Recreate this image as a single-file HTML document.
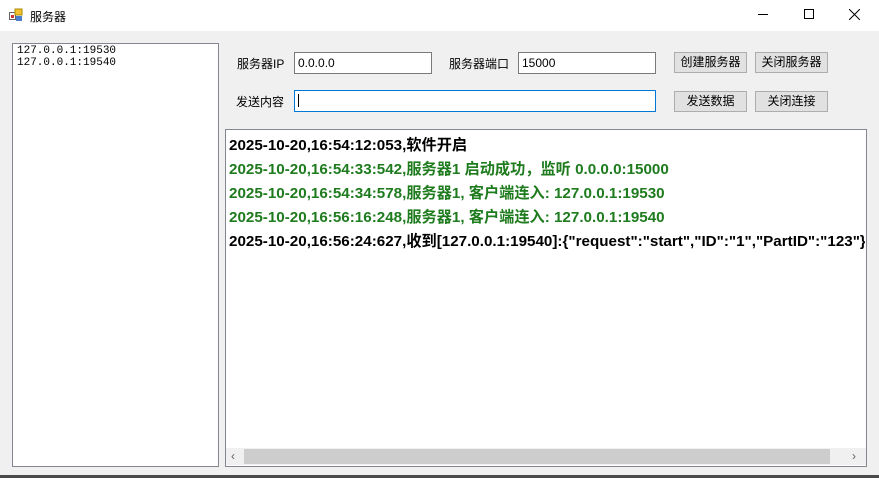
<!DOCTYPE html>
<html><head><meta charset="utf-8"><style>
*{margin:0;padding:0;box-sizing:border-box}
body{width:879px;height:478px;background:#f0f0f0;position:relative;overflow:hidden;font-family:"Liberation Sans","Noto Sans CJK SC",sans-serif;font-size:12px;color:#000}
.abs{position:absolute}
.title{left:0;top:0;width:879px;height:31px;background:#fff}
.inp{background:#fff;border:1px solid #7a7a7a;height:22px;font-size:12px;line-height:20px;padding-left:3px}
.btn{background:#e1e1e1;border:1px solid #adadad;height:21px;font-size:12px;text-align:center;line-height:19px}
.log{font-size:15.2px;font-weight:bold;white-space:nowrap;left:229px;font-family:"Liberation Sans","Noto Sans CJK SC",sans-serif}
.g{color:#1e7b1e}
</style></head><body>
<div class="abs title"></div>
<svg class="abs" style="left:9px;top:8px" width="15" height="14"><rect x="0.5" y="4.5" width="6" height="7" fill="#fff" stroke="#666"/><rect x="2" y="7" width="3" height="3" fill="#c33"/><rect x="6" y="1" width="7" height="6" fill="#f4c430" stroke="#a80"/><rect x="7" y="8" width="6" height="5" fill="#4a7fd0"/></svg>
<div class="abs" style="left:30px;top:8px;font-size:12px">服务器</div>
<div class="abs" style="left:758px;top:14px;width:10px;height:1px;background:#000"></div>
<div class="abs" style="left:804px;top:9px;width:10px;height:10px;border:1px solid #000"></div>
<svg class="abs" style="left:849px;top:9px" width="11" height="11"><path d="M0 0L11 11M11 0L0 11" stroke="#000" stroke-width="1"/></svg>

<div class="abs" style="left:12px;top:43px;width:207px;height:424px;background:#fff;border:1px solid #828790"></div>
<div class="abs" style="left:17px;top:45px;font-family:'Liberation Mono',monospace;font-size:11px;line-height:12px">127.0.0.1:19530<br>127.0.0.1:19540</div>

<div class="abs" style="left:237px;top:55px">服务器IP</div>
<div class="abs inp" style="left:294px;top:52px;width:138px">0.0.0.0</div>
<div class="abs" style="left:449px;top:55px">服务器端口</div>
<div class="abs inp" style="left:518px;top:52px;width:138px">15000</div>
<div class="abs btn" style="left:674px;top:52px;width:73px">创建服务器</div>
<div class="abs btn" style="left:755px;top:52px;width:73px">关闭服务器</div>

<div class="abs" style="left:236px;top:93px">发送内容</div>
<div class="abs inp" style="left:294px;top:90px;width:362px;border-color:#0078d7"><span style="display:inline-block;width:1px;height:13px;background:#000;margin-top:3px"></span></div>
<div class="abs btn" style="left:674px;top:91px;width:73px">发送数据</div>
<div class="abs btn" style="left:755px;top:91px;width:73px">关闭连接</div>

<div class="abs" style="left:225px;top:129px;width:642px;height:338px;background:#fff;border:1px solid #828790;overflow:hidden"></div>
<div class="abs log" style="top:133px">2025-10-20,16:54:12:053,软件开启</div>
<div class="abs log g" style="top:157px">2025-10-20,16:54:33:542,服务器1 启动成功，监听 0.0.0.0:15000</div>
<div class="abs log g" style="top:181px">2025-10-20,16:54:34:578,服务器1, 客户端连入: 127.0.0.1:19530</div>
<div class="abs log g" style="top:205px">2025-10-20,16:56:16:248,服务器1, 客户端连入: 127.0.0.1:19540</div>
<div class="abs" style="left:229px;top:229px;width:636px;overflow:hidden"><div class="log" style="position:static">2025-10-20,16:56:24:627,收到[127.0.0.1:19540]:{"request":"start","ID":"1","PartID":"123"}</div></div>
<div class="abs" style="left:226px;top:448px;width:640px;height:17px;background:#f0f0f0"></div>
<div class="abs" style="left:244px;top:449px;width:586px;height:15px;background:#cdcdcd"></div>
<div class="abs" style="left:231px;top:449px;color:#606060;font-size:12px">‹</div>
<div class="abs" style="left:852px;top:449px;color:#606060;font-size:12px">›</div>
<div class="abs" style="left:0;top:475px;width:879px;height:3px;background:#4a4a4a"></div>
</body></html>
